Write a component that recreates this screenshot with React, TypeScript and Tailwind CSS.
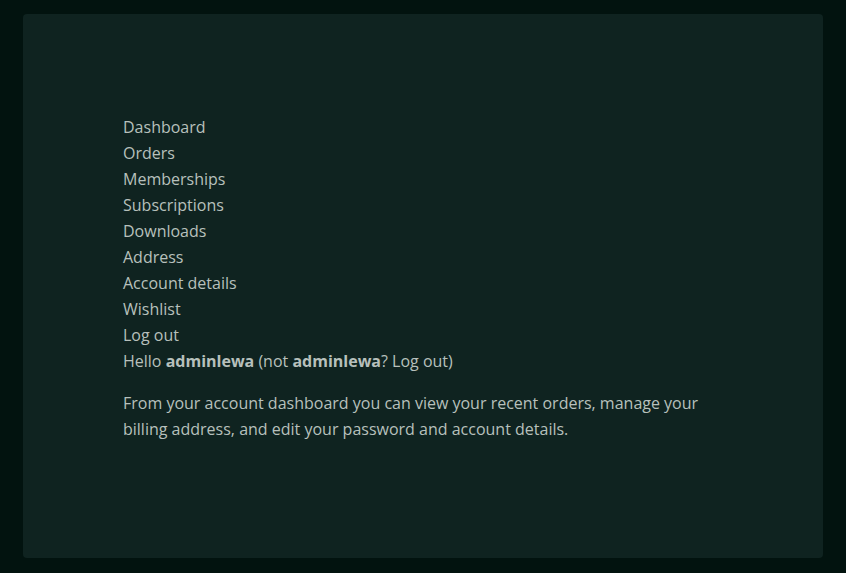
import React from 'react';

const links = ['Dashboard', 'Orders', 'Memberships', 'Subscriptions', 'Downloads', 'Address', 'Account details', 'Wishlist', 'Log out'];

const App: React.FC = () => {
    return (
        <div className="min-h-[573px] bg-[#02130f] px-[23px] pt-[14px] pb-[15px] font-['Open_Sans',sans-serif] text-[16px] leading-[26px] text-[#b7c0bc]">
            <div className="rounded-[4px] bg-[#0f2320] px-[100px] pt-[100px] pb-[100px]">
                {/* Account navigation */}
                <nav>
                    <ul>
                        {links.map((l) => (
                            <li key={l}>
                                <a href="#">{l}</a>
                            </li>
                        ))}
                    </ul>
                </nav>
                <div>
                    <p>
                        Hello <strong>adminlewa</strong> (not <strong>adminlewa</strong>? <a href="#">Log out</a>)
                    </p>
                    <p className="mt-4 mb-4">
                        From your account dashboard you can view your recent orders, manage your billing address, and edit your password and account details.
                    </p>
                </div>
            </div>
        </div>
    );
};

export default App;
